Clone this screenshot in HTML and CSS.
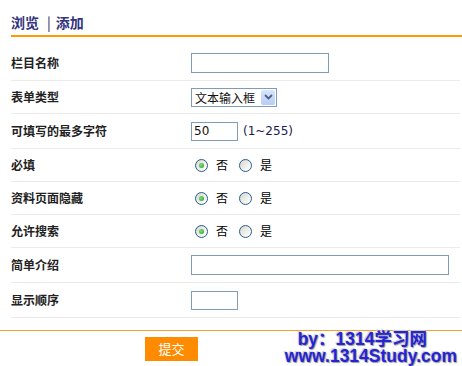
FILE: index.html
```html
<!DOCTYPE html>
<html lang="zh-CN">

<head>
    <meta charset="UTF-8">
    <title>字段管理</title>
    <link rel="stylesheet" href="styles.css">
</head>

<body>
    <div class="page">
        <div class="tabs">
            <a class="tab">浏览</a><span class="tab-sep">|</span><a class="tab">添加</a>
        </div>

        <div class="form">
            <div class="row tall">
                <div class="label">栏目名称</div>
                <div class="field"><span class="input input-mid"></span></div>
            </div>
            <div class="row">
                <div class="label">表单类型</div>
                <div class="field">
                    <span class="select">
                        <span class="select-text">文本输入框</span>
                        <span class="select-btn">
                            <svg width="9" height="6" viewBox="0 0 9 6">
                                <path d="M1 1 L4.5 4.5 L8 1" fill="none" stroke="#4d6185" stroke-width="1.8"/>
                            </svg>
                        </span>
                    </span>
                </div>
            </div>
            <div class="row tall">
                <div class="label">可填写的最多字符</div>
                <div class="field">
                    <span class="input input-small"><span class="input-value">50</span></span>
                    <span class="hint">(1~255)</span>
                </div>
            </div>
            <div class="row">
                <div class="label">必填</div>
                <div class="field">
                    <span class="radio checked"></span><span class="radio-text">否</span>
                    <span class="radio"></span><span class="radio-text">是</span>
                </div>
            </div>
            <div class="row">
                <div class="label">资料页面隐藏</div>
                <div class="field">
                    <span class="radio checked"></span><span class="radio-text">否</span>
                    <span class="radio"></span><span class="radio-text">是</span>
                </div>
            </div>
            <div class="row">
                <div class="label">允许搜索</div>
                <div class="field">
                    <span class="radio checked"></span><span class="radio-text">否</span>
                    <span class="radio"></span><span class="radio-text">是</span>
                </div>
            </div>
            <div class="row tall">
                <div class="label">简单介绍</div>
                <div class="field"><span class="input input-wide"></span></div>
            </div>
            <div class="row tall">
                <div class="label">显示顺序</div>
                <div class="field"><span class="input input-small"></span></div>
            </div>
        </div>

        <div class="footer">
            <button class="submit">提交</button>
        </div>

        <div class="watermark">
            <div class="wm-line wm-by">by：1314学习网</div>
            <div class="wm-line">www.1314Study.com</div>
        </div>
    </div>
</body>

</html>
```

FILE: styles.css
```css
body {
    margin: 0;
    padding: 0;
    background: #fff;
    font-family: "Noto Sans CJK SC", "DejaVu Sans", sans-serif;
    font-size: 12px;
    color: #222;
}

.page {
    position: relative;
    width: 462px;
    height: 366px;
    overflow: hidden;
}

.tabs {
    margin-left: 11px;
    padding-top: 12px;
    padding-bottom: 3px;
    line-height: 20px;
    height: 20px;
    border-bottom: 2px solid #ff9900;
    font-size: 14px;
    font-weight: bold;
    color: #33337f;
}

.tab-sep {
    display: inline-block;
    margin: 0 5px 0 8px;
    font-weight: normal;
    color: #1a1a50;
}

.form {
    margin: 9px 2px 0 11px;
}

.row {
    display: grid;
    grid-template-columns: 180px 1fr;
    align-items: center;
    height: 32px;
    border-bottom: 1px solid #ececec;
}

.row.tall {
    height: 34px;
}

.label {
    font-weight: bold;
    line-height: 16px;
}

.field {
    display: flex;
    align-items: center;
}

.input {
    display: inline-block;
    box-sizing: border-box;
    height: 20px;
    border: 1px solid #7f9db9;
    background: #fff;
}

.input-mid {
    width: 138px;
}

.input-small {
    width: 47px;
    height: 19px;
}

.input-wide {
    width: 258px;
}

.input-value {
    display: block;
    padding-left: 2px;
    font-family: "DejaVu Sans", sans-serif;
    font-size: 12px;
    line-height: 17px;
    color: #111;
}

.hint {
    margin-left: 5px;
    font-family: "DejaVu Sans", sans-serif;
    font-size: 12px;
    color: #1a1a50;
}

.select {
    display: inline-flex;
    align-items: center;
    box-sizing: border-box;
    width: 86px;
    height: 19px;
    border: 1px solid #7f9db9;
    background: #fff;
}

.select-text {
    flex: 1;
    padding-left: 3px;
    font-size: 12px;
    line-height: 15px;
    color: #111;
}

.select-btn {
    display: flex;
    align-items: center;
    justify-content: center;
    width: 14px;
    height: 15px;
    margin-right: 1px;
    border-radius: 2px;
    background: linear-gradient(#d9e5fd, #b7cbf5);
}

.radio {
    display: inline-block;
    position: relative;
    box-sizing: border-box;
    width: 13px;
    height: 13px;
    margin-left: 4px;
    border: 1px solid #2b5b8c;
    border-radius: 50%;
    background: linear-gradient(135deg, #d6d6d0, #fafaf8 80%);
}

.radio + .radio-text + .radio {
    margin-left: 11px;
}

.radio.checked::after {
    content: "";
    position: absolute;
    left: 3px;
    top: 3px;
    width: 5px;
    height: 5px;
    border-radius: 50%;
    background: radial-gradient(circle at 40% 40%, #7fe27f, #1f9a1f);
}

.radio-text {
    margin-left: 8px;
    line-height: 16px;
    color: #000;
}

.footer {
    margin-top: 12px;
    padding: 6px 0 0 145px;
    border-top: 1px solid #f7a030;
}

.submit {
    display: block;
    width: 53px;
    height: 24px;
    padding: 0;
    border: 0;
    background: #ff8c00;
    color: #fff;
    font-family: "Noto Sans CJK SC", sans-serif;
    font-size: 13px;
    line-height: 24px;
}

.watermark {
    position: absolute;
    right: 5px;
    top: 331px;
    text-align: right;
    font-family: "Liberation Sans", Arial, sans-serif;
    font-size: 17.5px;
    font-weight: bold;
    line-height: 17px;
    color: #2424d6;
    text-shadow: 1px 1px 1px #9a9a9a, -1px -1px 1px #d0d0d0;
}

.wm-line {
    height: 17px;
}

.wm-by {
    margin-right: 30px;
    font-family: "Liberation Sans", "Noto Sans CJK SC", sans-serif;
}
```
